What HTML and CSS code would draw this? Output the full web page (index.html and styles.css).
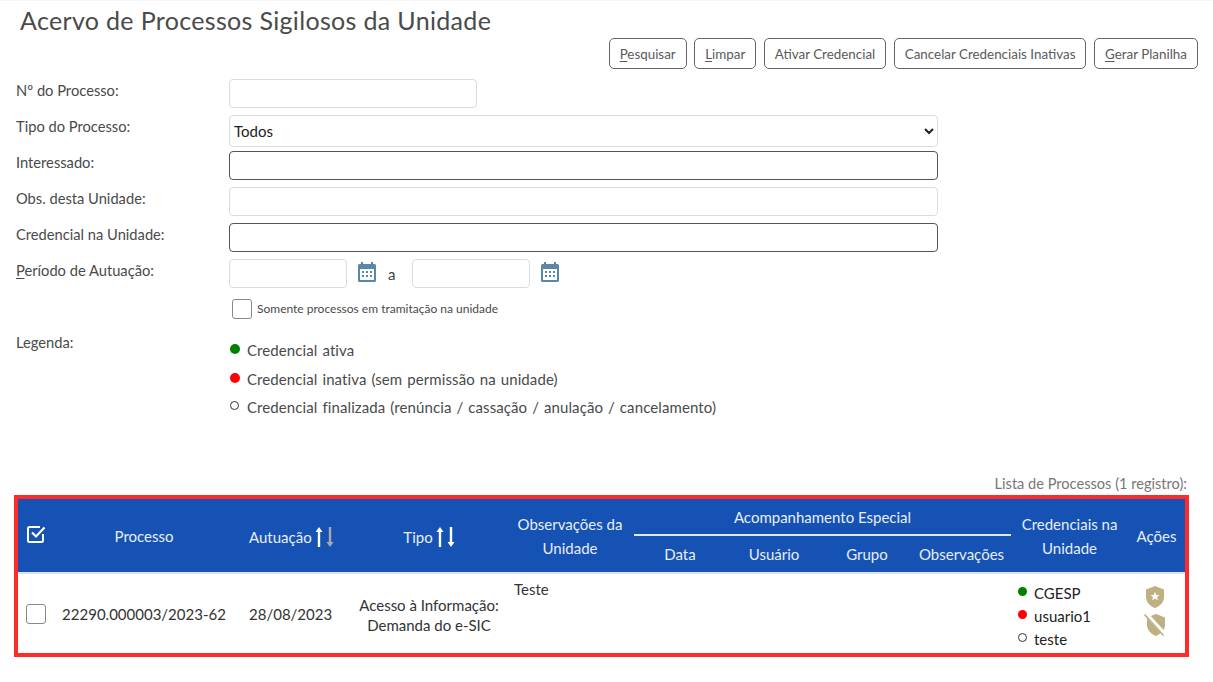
FILE: index.html
```html
<!DOCTYPE html>
<html lang="pt-BR">
<head>
<meta charset="utf-8">
<title>Acervo de Processos Sigilosos da Unidade</title>
<link rel="stylesheet" href="styles.css">
</head>
<body>
<svg class="defs" width="0" height="0" aria-hidden="true">
  <defs>
    <symbol id="cal" viewBox="0 0 18 20">
      <path fill="#5a86a8" d="M3 0h2v2h8V0h2v2h1.500A1.500 1.500 0 0 1 18 3.500v15a1.500 1.500 0 0 1-1.500 1.500h-15A1.500 1.500 0 0 1 0 18.500v-15A1.500 1.500 0 0 1 1.500 2H3z"/>
      <path fill="#fff" d="M2 7h14v11H2z"/>
      <path fill="#5a86a8" d="M4 9h2v2H4zM8 9h2v2H8zM12 9h2v2h-2zM4 13h2v2H4zM8 13h2v2H8zM12 13h2v2h-2z"/>
    </symbol>
    <symbol id="up" viewBox="0 0 8 20">
      <path fill="currentColor" d="M4 0 7.500 5H5.200v15H2.800V5H.5z"/>
    </symbol>
    <symbol id="down" viewBox="0 0 8 20">
      <path fill="currentColor" d="M4 20 .5 15h2.300V0h2.400v15h2.300z"/>
    </symbol>
  </defs>
</svg>
<header class="top">
  <h1 class="title">Acervo de Processos Sigilosos da Unidade</h1>
  <div class="toolbar">
    <button class="btn" type="button"><u>P</u>esquisar</button>
    <button class="btn" type="button"><u>L</u>impar</button>
    <button class="btn" type="button">Ativar Credencial</button>
    <button class="btn" type="button">Cancelar Credenciais Inativas</button>
    <button class="btn" type="button"><u>G</u>erar Planilha</button>
  </div>
</header>
<form class="filters">
  <label class="lbl">Nº do Processo:</label>
  <div class="field"><input class="inp w-248" type="text"></div>
  <label class="lbl">Tipo do Processo:</label>
  <div class="field"><select class="inp sel w-709"><option>Todos</option></select></div>
  <label class="lbl">Interessado:</label>
  <div class="field"><input class="inp w-709 dark" type="text"></div>
  <label class="lbl">Obs. desta Unidade:</label>
  <div class="field"><input class="inp w-709" type="text"></div>
  <label class="lbl">Credencial na Unidade:</label>
  <div class="field"><input class="inp w-709 dark" type="text"></div>
  <label class="lbl"><u>P</u>eríodo de Autuação:</label>
  <div class="field period">
    <input class="inp w-118" type="text">
    <svg class="calicon" width="18" height="20"><use href="#cal"/></svg>
    <span class="a">a</span>
    <input class="inp w-118" type="text">
    <svg class="calicon" width="18" height="20"><use href="#cal"/></svg>
  </div>
  <div class="empty"></div>
  <div class="check-row"><span class="box"></span><span class="small">Somente processos em tramitação na unidade</span></div>
  <label class="lbl legend-lbl">Legenda:</label>
  <ul class="legend">
    <li><span class="dot green"></span>Credencial ativa</li>
    <li><span class="dot red"></span>Credencial inativa (sem permissão na unidade)</li>
    <li><span class="dot hollow"></span>Credencial finalizada (renúncia / cassação / anulação / cancelamento)</li>
  </ul>
</form>
<p class="caption">Lista de Processos (1 registro):</p>
<div class="frame">
  <table class="grid">
    <colgroup>
      <col class="c1"><col class="c2"><col class="c3"><col class="c4"><col class="c5">
      <col class="c6"><col class="c7"><col class="c8"><col class="c9"><col class="c10"><col class="c11">
    </colgroup>
    <thead>
      <tr class="h1row">
        <th rowspan="2" class="chk">
          <svg width="20" height="20" viewBox="0 0 20 20"><path fill="none" stroke="#fff" stroke-width="2" d="M17 10v6.500a1.500 1.500 0 0 1-1.500 1.500h-12A1.500 1.500 0 0 1 2 16.500v-12A1.500 1.500 0 0 1 3.500 3H14"/><path fill="none" stroke="#fff" stroke-width="2.200" d="M6 8.500l4 4 8.500-9"/></svg>
        </th>
        <th rowspan="2">Processo</th>
        <th rowspan="2" class="left sortcell"><span class="sort">Autuação <svg class="ar" width="8" height="20"><use href="#up"/></svg><svg class="ar off" width="8" height="20"><use href="#down"/></svg></span></th>
        <th rowspan="2" class="sortcell"><span class="sort">Tipo <svg class="ar" width="8" height="20"><use href="#up"/></svg><svg class="ar" width="8" height="20"><use href="#down"/></svg></span></th>
        <th rowspan="2" class="two">Observações da Unidade</th>
        <th colspan="4" class="group"><span>Acompanhamento Especial</span></th>
        <th rowspan="2" class="two">Credenciais na Unidade</th>
        <th rowspan="2">Ações</th>
      </tr>
      <tr class="h2row">
        <th>Data</th><th>Usuário</th><th>Grupo</th><th>Observações</th>
      </tr>
    </thead>
    <tbody>
      <tr>
        <td class="center"><span class="box inline"></span></td>
        <td class="center">22290.000003/2023-62</td>
        <td class="date">28/08/2023</td>
        <td class="center tipo">Acesso à Informação: Demanda do e-SIC</td>
        <td class="obs">Teste</td>
        <td></td><td></td><td></td><td></td>
        <td class="creds">
          <div><span class="dot green"></span>CGESP</div>
          <div><span class="dot red"></span>usuario1</div>
          <div><span class="dot hollow"></span>teste</div>
        </td>
        <td class="acts">
          <svg class="shield" width="20" height="22" viewBox="0 0 20 22"><path fill="#bfb083" d="M10 0 19 3.500V11c0 5-4 9-9 11-5-2-9-6-9-11V3.500z"/><path fill="#fff" d="m10 6 1.300 3H14.500l-2.500 2.100.9 3.200L10 12.500l-2.900 1.800.9-3.200L5.500 9h3.200z"/></svg>
          <svg class="shield" width="22" height="22" viewBox="0 0 22 22"><path fill="#bfb083" d="M12 0l9 3.500V11c0 1.800-.5 3.500-1.400 5L6.800 1.900zM3.300 4.400 16.600 19.300c-1.400 1.100-2.900 2-4.600 2.700-5-2-9-6-9-11V4.500z"/><path fill="none" stroke="#bfb083" stroke-width="1.600" d="M.6.600 19.500 21.500"/></svg>
        </td>
      </tr>
    </tbody>
  </table>
</div>
</body>
</html>
```
FILE: styles.css
```css
* { box-sizing: border-box; }
html, body { margin: 0; padding: 0; }
body {
  background: #fff;
  color: #444;
  font-family: Lato, "Open Sans", "Liberation Sans", sans-serif;
  font-size: 15px;
  border-top: 1px solid #f6f6f6;
}
.defs { position: absolute; }
u { text-underline-offset: 2px; }

.top { padding: 0 15px 0 20px; }
.title {
  margin: 0;
  padding-top: 3px;
  height: 37px;
  font-size: 25px;
  line-height: 33px;
  letter-spacing: .33px;
  font-weight: 400;
  color: #4a4a4a;
}
.toolbar { display: flex; justify-content: flex-end; gap: 7.5px; }
.btn {
  height: 31px;
  padding: 0 10px;
  background: #fff;
  border: 1px solid #666;
  border-radius: 5px;
  font: inherit;
  font-size: 13.4px;
  color: #5a5a5a;
}

.filters {
  display: grid;
  grid-template-columns: 213px 1fr;
  padding: 10px 0 0 16px;
  row-gap: 7px;
}
.lbl { font-size: 14.7px; line-height: 24px; color: #4a4a4a; margin-top: -1px; }
.field { display: flex; align-items: flex-start; height: 29px; }
.inp {
  height: 29px;
  background: #fff;
  border: 1px solid #d6dde3;
  border-radius: 4px;
  font: inherit;
  color: #222;
  padding: 0 4px;
}
.w-248 { width: 248px; }
.w-709 { width: 709px; }
.w-118 { width: 118px; }
.sel { height: 32px; color: #222; font-size: 15px; padding: 0; }
.dark { border-color: #555; }
.period { align-items: center; }
.period .calicon { margin: 0 0 3px 11px; }
.period .a { margin: 0 17px 0 12px; font-size: 15px; }
.empty { height: 1px; }
.check-row { display: flex; align-items: center; height: 20px; padding-left: 3px; margin-top: 4px; }
.box {
  display: block;
  flex: none;
  width: 20px;
  height: 20px;
  border: 1px solid #888;
  border-radius: 3px;
  background: #fff;
}
.box.inline { margin: 0 auto; }
.small { margin-left: 5px; padding-bottom: 2px; font-size: 12px; color: #4a4a4a; }
.legend-lbl { margin-top: 4px; }
.legend { list-style: none; margin: 10px 0 0; padding: 0 0 0 1px; }
.legend li { display: flex; align-items: center; height: 28px; font-size: 15px; letter-spacing: .1px; word-spacing: 1px; color: #4a4a4a; }
.legend li:first-child { margin-bottom: 1px; }
.legend li:last-child { height: 27px; }
.dot {
  display: inline-block;
  flex: none;
  width: 10px;
  height: 10px;
  border-radius: 50%;
  margin: -3px 7px 0 0;
}
.green { background: #008000; }
.red { background: #f00; }
.hollow { width: 9px; height: 9px; border: 1.500px solid #333; background: #fff; }
.legend .hollow { margin-right: 8px; }

.caption { margin: 51px 26px 0 0; height: 24px; text-align: right; line-height: 26px; font-size: 14.6px; color: #777; }
.frame { margin: 0 24px 0 14px; border: 4px solid #ff2a2a; }
.grid { width: 100%; table-layout: fixed; border-collapse: collapse; }
.c1 { width: 36px; } .c2 { width: 180px; } .c3 { width: 118px; } .c4 { width: 154px; }
.c5 { width: 128px; } .c6 { width: 92px; } .c7 { width: 96px; } .c8 { width: 90px; }
.c9 { width: 99px; } .c10 { width: 117px; } .c11 { width: 57px; }
.grid thead { background: #1552b4; }
.grid th { color: #e8edf5; font-weight: 400; font-size: 15px; line-height: 24px; padding: 0; text-align: center; }
.h1row { height: 37px; }
.h2row { height: 37px; }
.h2row th { vertical-align: bottom; padding-bottom: 6px; }
.chk svg { display: block; margin: -3px 0 0 8px; }
.left { text-align: left !important; padding-left: 15px !important; }
.sortcell { padding-top: 3px !important; }
.sort { display: inline-flex; align-items: center; gap: 3px; }
.ar { color: #fff; }
.ar.off { color: #a9a9a9; }
.two { padding: 0 3px !important; }
.group { vertical-align: top; }
.group span { display: block; height: 37px; line-height: 36px; border-bottom: 2px solid #e6e9ee; }
.grid tbody tr { height: 80px; border-top: 2px solid #dde2e8; }
.grid td { padding: 0; color: #333; font-size: 15px; vertical-align: middle; }
.center { text-align: center; }
.date { padding-left: 15px !important; }
.tipo { line-height: 20px; padding: 2px 6px 0 !important; }
.obs { vertical-align: top !important; padding: 6px 8px 0 !important; }
.creds { padding: 6px 0 0 7px !important; line-height: 23px; color: #222 !important; }
.creds div { display: flex; align-items: center; }
.creds .dot { width: 9px; height: 9px; margin: -4px 7px 0 0; }
.acts { padding-right: 3px !important; }
.shield { display: block; margin: 0 auto 6px; }
```
